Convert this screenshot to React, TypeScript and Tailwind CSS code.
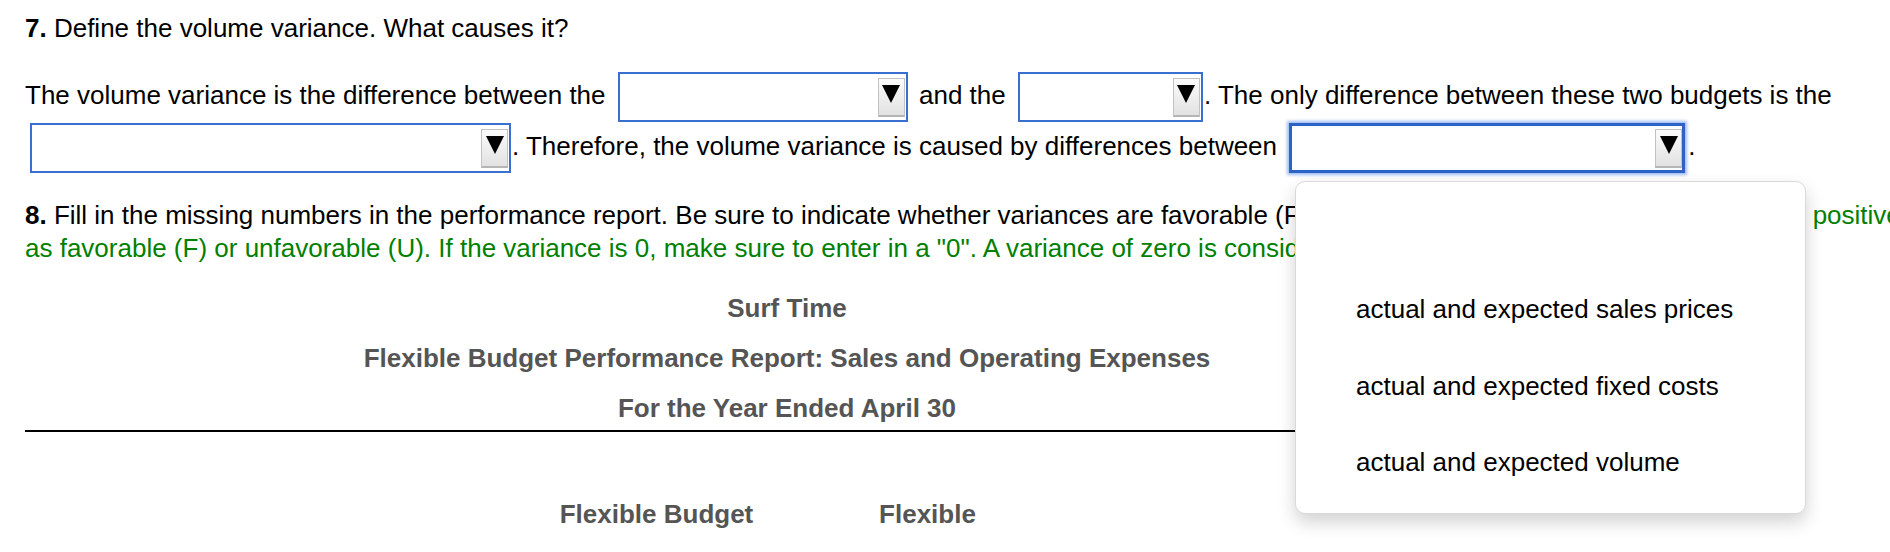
import React from "react";

function Arrow() {
  return (
    <span className="flex items-start justify-center w-[27px] h-[39px] border border-[#c2c2c2] border-b-2 border-b-[#b5b5b5] bg-linear-to-b from-[#fbfbfb] to-[#e2e2e2] pt-[6px] box-border">
      <svg width="18" height="18" viewBox="0 0 18 18" className="block">
        <polygon points="0,0 18,0 9,18" fill="#000" />
      </svg>
    </span>
  );
}

function Sel({ cls, focused }: { cls: string; focused?: boolean }) {
  return (
    <span
      className={
        "inline-flex align-middle items-center justify-end h-[50px] bg-white box-border " +
        (focused
          ? "border-[3px] border-[#2e62c8] shadow-[0_0_3px_2px_rgba(80,135,225,0.55)] pr-0"
          : "border-2 border-[#3a6ed0] pr-px") +
        " " +
        cls
      }
    >
      <Arrow />
    </span>
  );
}

export default function App() {
  const items = [
    "actual and expected sales prices",
    "actual and expected fixed costs",
    "actual and expected volume",
  ];
  return (
    <div className="relative w-[1890px] h-[552px] overflow-hidden bg-white font-['Liberation_Sans',Arial,sans-serif] text-[26px] text-black">
      <div className="w-[1990px] pl-[25px] pt-[12px]">
        <div className="leading-[33px]">
          <b>7.</b> Define the volume variance. What causes it?
        </div>

        <div className="mt-[27px] leading-[33px]">
          The volume variance is the difference between the{" "}
          <Sel cls="w-[290px] ml-[5px] mr-[4px] mb-px" /> and the{" "}
          <Sel cls="w-[185px] ml-[5px] mr-px mb-px" />. The only difference between these two budgets is the{" "}
          <Sel cls="w-[481px] ml-[5px] mr-px mb-px" />. Therefore, the volume variance is caused by differences
          between <Sel focused cls="w-[396px] ml-[5px] mr-[3px] mb-px" />.
        </div>

        <div className="mt-[25px] leading-[33px] whitespace-nowrap">
          <b>8.</b> Fill in the missing numbers in the performance report. Be sure to indicate whether variances
          are favorable (F) or unfavorable (U).{" "}
          <span className="text-[#008000]">
            Enter each variance as positive numbers and label them
          </span>
          <br />
          <span className="text-[#008000]">
            as favorable (F) or unfavorable (U). If the variance is 0, make sure to enter in a "0". A variance of
            zero is considered neither favorable nor unfavorable.
          </span>
        </div>

        <div className="mt-[18px] w-[1524px] font-bold text-[#555]">
          <div className="text-center h-[50px] leading-[50px]">Surf Time</div>
          <div className="text-center h-[50px] leading-[50px]">
            Flexible Budget Performance Report: Sales and Operating Expenses
          </div>
          <div className="text-center h-[47px] leading-[50px] border-b-2 border-black box-content">
            For the Year Ended April 30
          </div>
          <div className="grid grid-cols-[496px_271px_271px_243px_243px] pt-[68px] leading-[29px]">
            <div></div>
            <div className="text-center">Flexible Budget</div>
            <div className="text-center">Flexible</div>
            <div></div>
            <div></div>
          </div>
        </div>
      </div>

      <div className="absolute left-[1295px] top-[181px] w-[511px] h-[333px] bg-white border border-[#d9d9d9] rounded-[10px] shadow-[0_8px_18px_rgba(0,0,0,0.18)] pt-[13px] box-border">
        <div className="h-[76.5px]"></div>
        {items.map((t) => (
          <div key={t} className="h-[76.5px] flex items-center pl-[60px] leading-[29px]">
            {t}
          </div>
        ))}
      </div>
    </div>
  );
}
